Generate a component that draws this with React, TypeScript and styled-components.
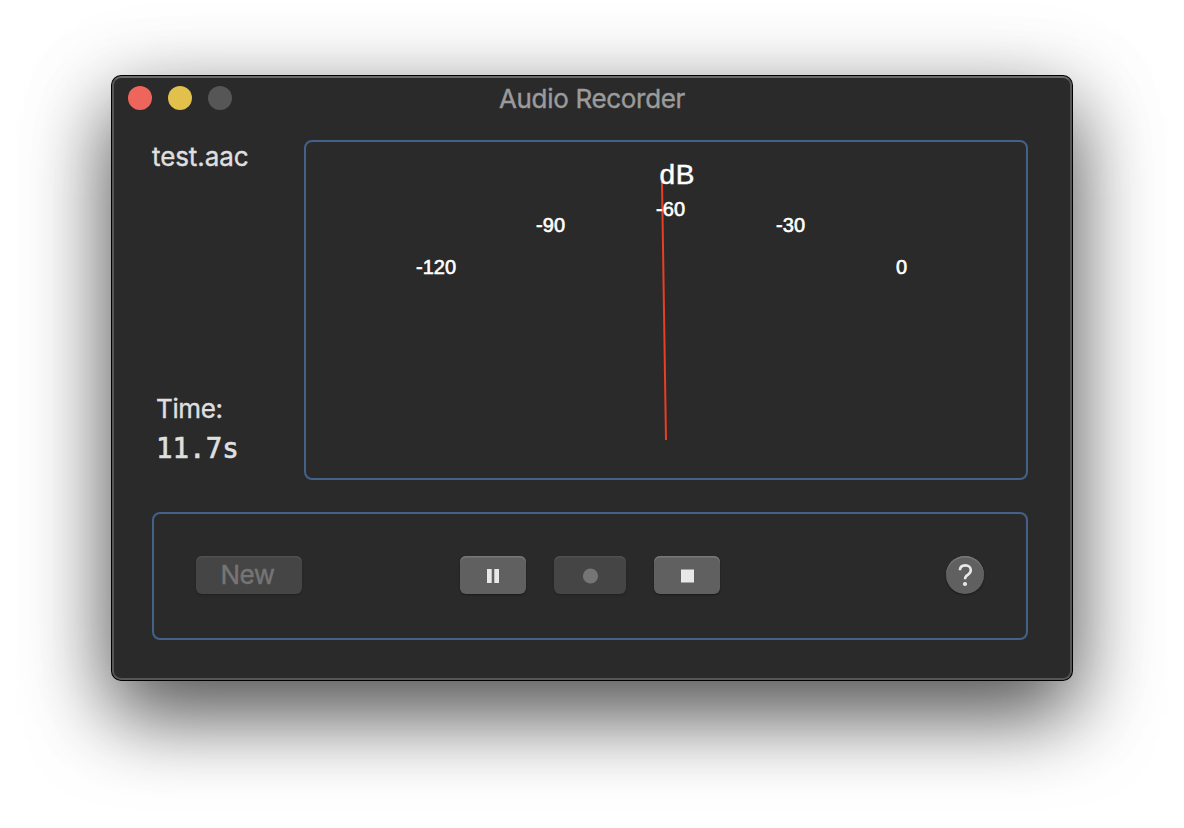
import React from "react";
import styled, { createGlobalStyle, css } from "styled-components";

const GlobalStyle = createGlobalStyle`
  * { box-sizing: border-box; }
  body { margin: 0; background: #fff; overflow: hidden; }
`;

const Desktop = styled.div`
  width: 1184px;
  height: 828px;
  padding: 76px 112px 148px;
  overflow: hidden;
  background: #fff;
  font-family: Inter, "Liberation Sans", sans-serif;
  -webkit-text-stroke: 0.4px currentColor;
`;

const Window = styled.main`
  display: flex;
  flex-direction: column;
  width: 960px;
  height: 604px;
  border: 2px solid #565656;
  border-top-color: #6b6b6b;
  border-radius: 9px;
  background: #2a2a2a;
  color: #dfdfdf;
  box-shadow: 0 0 0 1px #000, 0 36px 80px rgba(0, 0, 0, 0.56), 0 20px 90px rgba(0, 0, 0, 0.26);
`;

const TitleBar = styled.header`
  display: grid;
  grid-template-columns: 120px 1fr 120px;
  align-items: center;
  height: 42px;
`;

const Lights = styled.div`
  display: flex;
  gap: 16px;
  padding: 0 0 2px 14px;
`;

const Light = styled.span<{ $color: string }>`
  width: 24px;
  height: 24px;
  border-radius: 50%;
  background: ${(p) => p.$color};
`;

const Title = styled.h1`
  margin: 0;
  text-align: center;
  font-size: 26px;
  font-weight: 400;
  line-height: 32px;
  letter-spacing: -0.32px;
  color: #9b9b9b;
`;

const Content = styled.div`
  display: flex;
  flex-direction: column;
  gap: 32px;
  padding: 20px 42px 0 38px;
`;

const Upper = styled.section`
  display: flex;
  justify-content: space-between;
  height: 340px;
`;

const Info = styled.div`
  display: flex;
  flex-direction: column;
  justify-content: space-between;
  padding: 1px 0 15px;
  font-size: 26px;
  line-height: 32px;
`;

const FileName = styled.div`
  letter-spacing: -0.1px;
`;

const Elapsed = styled.div`
  padding-left: 4px;
`;

const TimeLabel = styled.div`
  letter-spacing: -0.4px;
`;

const Seconds = styled.div`
  margin-top: 6px;
  font-family: "DejaVu Sans Mono", monospace;
  font-size: 27.5px;
  line-height: 34px;
  -webkit-text-stroke-width: 0.7px;
`;

const panel = css`
  border: 2px solid #436189;
  border-radius: 8px;
`;

const MeterPanel = styled.div`
  ${panel}
  width: 724px;
`;

const Dial = styled.svg`
  display: block;
  width: 720px;
  height: 336px;
  font-family: "Liberation Sans", Arial, sans-serif;
  fill: #fff;
  -webkit-text-stroke-width: 0;
`;

const Controls = styled.section`
  ${panel}
  display: grid;
  grid-template-columns: 264px 1fr 38px;
  align-items: start;
  height: 128px;
  padding: 42px 42px 0;
`;

const Transport = styled.div`
  display: flex;
  gap: 28px;
`;

const Button = styled.button<{ $width: number; $round?: boolean }>`
  display: flex;
  align-items: center;
  justify-content: center;
  width: ${(p) => p.$width}px;
  height: 38px;
  padding: 0 3px 0 0;
  border: 0;
  border-radius: ${(p) => (p.$round ? "50%" : "6px")};
  background: #606060;
  color: #e8e8e8;
  font: 400 26px/38px Inter, "Liberation Sans", sans-serif;
  letter-spacing: -0.5px;
  -webkit-text-stroke: 0.4px currentColor;
  box-shadow: inset 0 1.5px 0 #787878, 0 1px 2px rgba(0, 0, 0, 0.4);

  &:disabled {
    background: #454545;
    color: #757575;
    box-shadow: inset 0 1.5px 0 #515151, 0 1px 2px rgba(0, 0, 0, 0.25);
  }
`;

const IconButton = styled(Button)`
  padding: 0;
`;

const Glyph = styled.svg`
  display: block;
  flex: none;
  fill: currentColor;
`;

const marks = [
  { x: 110, y: 132, label: "-120", width: 40 },
  { x: 230, y: 90, label: "-90", width: 29 },
  { x: 350, y: 74, label: "-60", width: 29 },
  { x: 470, y: 90, label: "-30", width: 29 },
  { x: 590, y: 132, label: "0", width: 11.5 },
];

function Meter() {
  return (
    <MeterPanel>
      <Dial viewBox="0 0 720 336">
        <line x1="356" y1="40" x2="360" y2="298" stroke="#e93e24" strokeWidth="2" />
        <text x="353.5" y="42" fontSize="28" stroke="#fff" strokeWidth="0.5" textLength="35">
          dB
        </text>
        {marks.map((m) => (
          <text key={m.label} x={m.x} y={m.y} fontSize="20" stroke="#fff" strokeWidth="0.6" textLength={m.width}>
            {m.label}
          </text>
        ))}
      </Dial>
    </MeterPanel>
  );
}

export default function App() {
  return (
    <Desktop>
      <GlobalStyle />
      <Window>
        <TitleBar>
          <Lights>
            <Light $color="#ee665b" />
            <Light $color="#e2c04c" />
            <Light $color="#565656" />
          </Lights>
          <Title>Audio Recorder</Title>
        </TitleBar>
        <Content>
          <Upper>
            <Info>
              <FileName>test.aac</FileName>
              <Elapsed>
                <TimeLabel>Time:</TimeLabel>
                <Seconds>11.7s</Seconds>
              </Elapsed>
            </Info>
            <Meter />
          </Upper>
          <Controls>
            <Button $width={106} disabled>New</Button>
            <Transport>
              <IconButton $width={66} aria-label="Pause">
                <Glyph width="66" height="38">
                  <path d="M27 13h4.7v14H27zM34.3 13H39v14h-4.7z" />
                </Glyph>
              </IconButton>
              <IconButton $width={72} disabled aria-label="Record">
                <Glyph width="72" height="38">
                  <circle cx="36.5" cy="20" r="7.6" />
                </Glyph>
              </IconButton>
              <IconButton $width={66} aria-label="Stop">
                <Glyph width="66" height="38">
                  <path d="M27 13.5h13v13H27z" />
                </Glyph>
              </IconButton>
            </Transport>
            <IconButton $width={38} $round aria-label="Help">
              <Glyph width="38" height="38">
                <path
                  d="M13.9 14.3C14 11.2 16.2 9.4 19.3 9.4c3.3 0 5.5 1.9 5.5 4.7 0 2.2-1 3.4-3 4.7-2 1.2-2.7 2.2-2.7 4v.5"
                  fill="none"
                  stroke="currentColor"
                  strokeWidth="2.6"
                />
                <circle cx="19" cy="28" r="2.1" />
              </Glyph>
            </IconButton>
          </Controls>
        </Content>
      </Window>
    </Desktop>
  );
}
